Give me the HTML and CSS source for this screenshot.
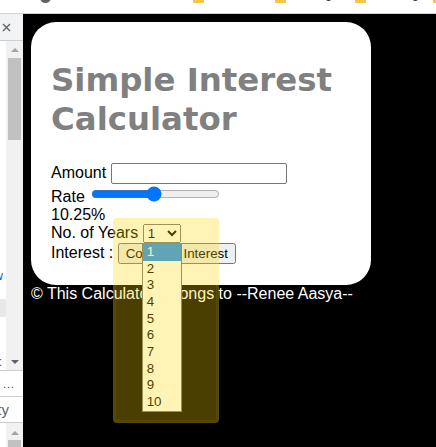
FILE: index.html
```
<!DOCTYPE html>
<html>
<head>
<meta charset="utf-8">
<title>Simple Interest Calculator</title>
<link rel="stylesheet" href="styles.css">
</head>
<body>
<div class="screen">
  <div class="bookmarks">
    <span class="avatar"></span>
    <span class="bm bm-1"><span class="folder"></span><span class="bm-label">Work</span></span>
    <span class="bm bm-2"><span class="folder"></span><span class="bm-label">Coding</span></span>
    <span class="bm bm-3"><span class="folder"></span><span class="bm-label">Reading</span></span>
    <span class="bm bm-4"><span class="folder"></span><span class="bm-label">More</span></span>
  </div>
  <div class="main">
    <aside class="devtools">
      <div class="dt-head">
        <svg class="dt-close" width="9" height="9" viewBox="0 0 9 9"><path d="M1 1L8 8M8 1L1 8" stroke="#5f6368" stroke-width="1.4" fill="none"/></svg>
      </div>
      <div class="dt-body">
        <div class="dt-content">
          <div class="dt-clip dt-link"><span>Overview</span></div>
          <div class="dt-hl"></div>
          <div class="dt-clip dt-link dt-colon"><span>a:</span></div>
        </div>
        <div class="dt-scroll">
          <span class="arrow-up"></span>
          <span class="thumb"></span>
          <span class="grow"></span>
          <span class="arrow-down"></span>
        </div>
      </div>
      <div class="dt-row dt-more">...</div>
      <div class="dt-row"><div class="dt-clip dt-prop"><span>Property</span></div></div>
      <div class="dt-body dt-lower">
        <div class="dt-content"></div>
        <div class="dt-scroll">
          <span class="arrow-up arrow-low"></span>
          <span class="thumb thumb-low"></span>
        </div>
      </div>
    </aside>
    <div class="page">
      <div class="card">
        <h1 class="title">Simple Interest Calculator</h1>
        <div class="form">
          Amount <input type="number" class="amount"><br>
          Rate <input type="range" class="rate" min="1" max="20" step="0.25" value="10.25"><br>
          <span class="rate-val">10.25%</span><br>
          No. of Years <span class="select-wrap"><select class="years"><option>1</option><option>2</option><option>3</option><option>4</option><option>5</option><option>6</option><option>7</option><option>8</option><option>9</option><option>10</option></select><ul class="popup">
              <li class="sel">1</li><li>2</li><li>3</li><li>4</li><li>5</li><li>6</li><li>7</li><li>8</li><li>9</li><li>10</li>
            </ul></span><br>
          Interest : <button class="compute">Compute Interest</button>
        </div>
      </div>
      <p class="footer">© This Calculator belongs to --Renee Aasya--</p>
      <div class="drag-overlay"></div>
    </div>
  </div>
</div>
</body>
</html>
```
FILE: styles.css
```
* { box-sizing: border-box; }
html, body { margin: 0; padding: 0; }
body {
  width: 436px;
  height: 447px;
  overflow: hidden;
  background: #fff;
  font-family: "Liberation Sans", Arial, sans-serif;
}
.screen {
  display: flex;
  flex-direction: column;
  width: 436px;
  height: 447px;
}

/* bookmarks strip */
.bookmarks {
  height: 14px;
  flex: none;
  background: #fff;
  border-bottom: 1px solid #d5d5d5;
  display: flex;
  align-items: flex-start;
  overflow: hidden;
  padding-left: 40px;
}
.avatar {
  width: 11px;
  height: 11px;
  border-radius: 50%;
  background: #5f6368;
  margin-top: -8px;
  flex: none;
}
.bm {
  display: flex;
  align-items: flex-start;
  flex: none;
  gap: 6px;
}
.bm-1 { margin-left: 142px; width: 82px; }
.bm-2 { width: 80px; }
.bm-3 { width: 78px; }
.folder {
  width: 11px;
  height: 10px;
  background: #f3c54d;
  border-radius: 1px;
  margin-top: -7px;
  flex: none;
}
.bm-label {
  font-size: 12px;
  line-height: 14px;
  color: #202124;
  margin-top: -13px;
  margin-left: 2px;
  white-space: nowrap;
}

.main {
  flex: 1;
  display: flex;
  min-height: 0;
}

/* devtools side panel */
.devtools {
  width: 23px;
  flex: none;
  display: flex;
  flex-direction: column;
  background: #fff;
  overflow: hidden;
}
.dt-head {
  height: 27px;
  flex: none;
  background: #f1f3f4;
  border-bottom: 1px solid #cacdd1;
  padding: 9px 0 0 2px;
}
.dt-close { display: block; }
.dt-body {
  height: 330px;
  flex: none;
  display: flex;
  border-bottom: 1px solid #cacdd1;
}
.dt-content {
  width: 6px;
  flex: none;
  display: flex;
  flex-direction: column;
}
.dt-clip {
  display: flex;
  justify-content: flex-end;
  overflow: hidden;
  white-space: nowrap;
}
.dt-link {
  font-size: 12px;
  line-height: 14px;
  color: #1a4bd8;
  width: 3px;
  margin-top: 228px;
}
.dt-hl {
  height: 18px;
  background: #e8e8e8;
  margin-top: 16px;
}
.dt-colon { margin-top: 38px; width: 2px; }
.dt-scroll {
  flex: 1;
  background: #f1f1f1;
  display: flex;
  flex-direction: column;
  align-items: center;
}
.arrow-up {
  width: 0;
  height: 0;
  border-left: 4px solid transparent;
  border-right: 4px solid transparent;
  border-bottom: 4px solid #a3a3a3;
  margin: 7px 0 6px;
  flex: none;
}
.thumb {
  width: 13px;
  height: 82px;
  background: #c1c1c1;
  flex: none;
}
.grow { flex: 1; }
.arrow-down {
  width: 0;
  height: 0;
  border-left: 4px solid transparent;
  border-right: 4px solid transparent;
  border-top: 4px solid #5f6368;
  margin-bottom: 6px;
  flex: none;
}
.dt-row {
  height: 26px;
  flex: none;
  border-bottom: 1px solid #cacdd1;
  display: flex;
  align-items: center;
  color: #5f6368;
  font-size: 14px;
}
.dt-more {
  padding: 0 0 0 3px;
  font-size: 11px;
  letter-spacing: 1px;
  color: #3c4043;
  align-items: flex-end;
  padding-bottom: 6px;
}
.dt-prop { width: 9px; font-size: 15px; }
.dt-lower { flex: 1; border-bottom: 0; height: auto; }
.arrow-low { margin: 8px 0 5px; }
.thumb-low { height: 40px; }

/* page area */
.page {
  flex: 1;
  position: relative;
  background: #000;
  padding: 8px;
  overflow: hidden;
}
.card {
  width: 340px;
  background: #fff;
  border-radius: 25px;
  padding: 18px 20px 21px;
  font-size: 16px;
  color: #000;
}
.title {
  font-family: "DejaVu Sans", Verdana, sans-serif;
  font-weight: bold;
  font-size: 32.4px;
  line-height: 39px;
  color: #808080;
  margin: 21px 0 24px;
}
.form { line-height: normal; }
.amount {
  width: 176px;
  height: 21px;
  font: 13.333px "Liberation Sans", Arial, sans-serif;
  border: 1px solid #767676;
  border-radius: 2px;
  padding: 1px 2px;
  vertical-align: baseline;
}
.rate { width: 129px; margin: 2px; vertical-align: baseline; }
.select-wrap { position: relative; display: inline-block; }
.years {
  font: 13.333px "Liberation Sans", Arial, sans-serif;
  width: 38px;
}
.popup {
  position: absolute;
  left: -1px;
  top: 100%;
  width: 40px;
  margin: 0;
  padding: 0;
  list-style: none;
  background: #fff;
  border: 1px solid #767676;
  font: 13.333px "Liberation Sans", Arial, sans-serif;
  color: #000;
  z-index: 2;
}
.popup li {
  height: 16.6667px;
  line-height: 16.6667px;
  padding-left: 4px;
}
.popup li.sel { background: #1e90ff; color: #fff; }
.compute {
  font: 13.333px "Liberation Sans", Arial, sans-serif;
}
.footer {
  margin: 0;
  color: #fff;
  font-size: 16px;
  line-height: 18px;
}
.drag-overlay {
  position: absolute;
  left: 90px;
  top: 204px;
  width: 106px;
  height: 205px;
  border-radius: 4px;
  background: rgba(255, 218, 0, 0.29);
  box-shadow: inset 0 0 0 3px rgba(255, 240, 120, 0.06);
  z-index: 3;
  pointer-events: none;
}
```
